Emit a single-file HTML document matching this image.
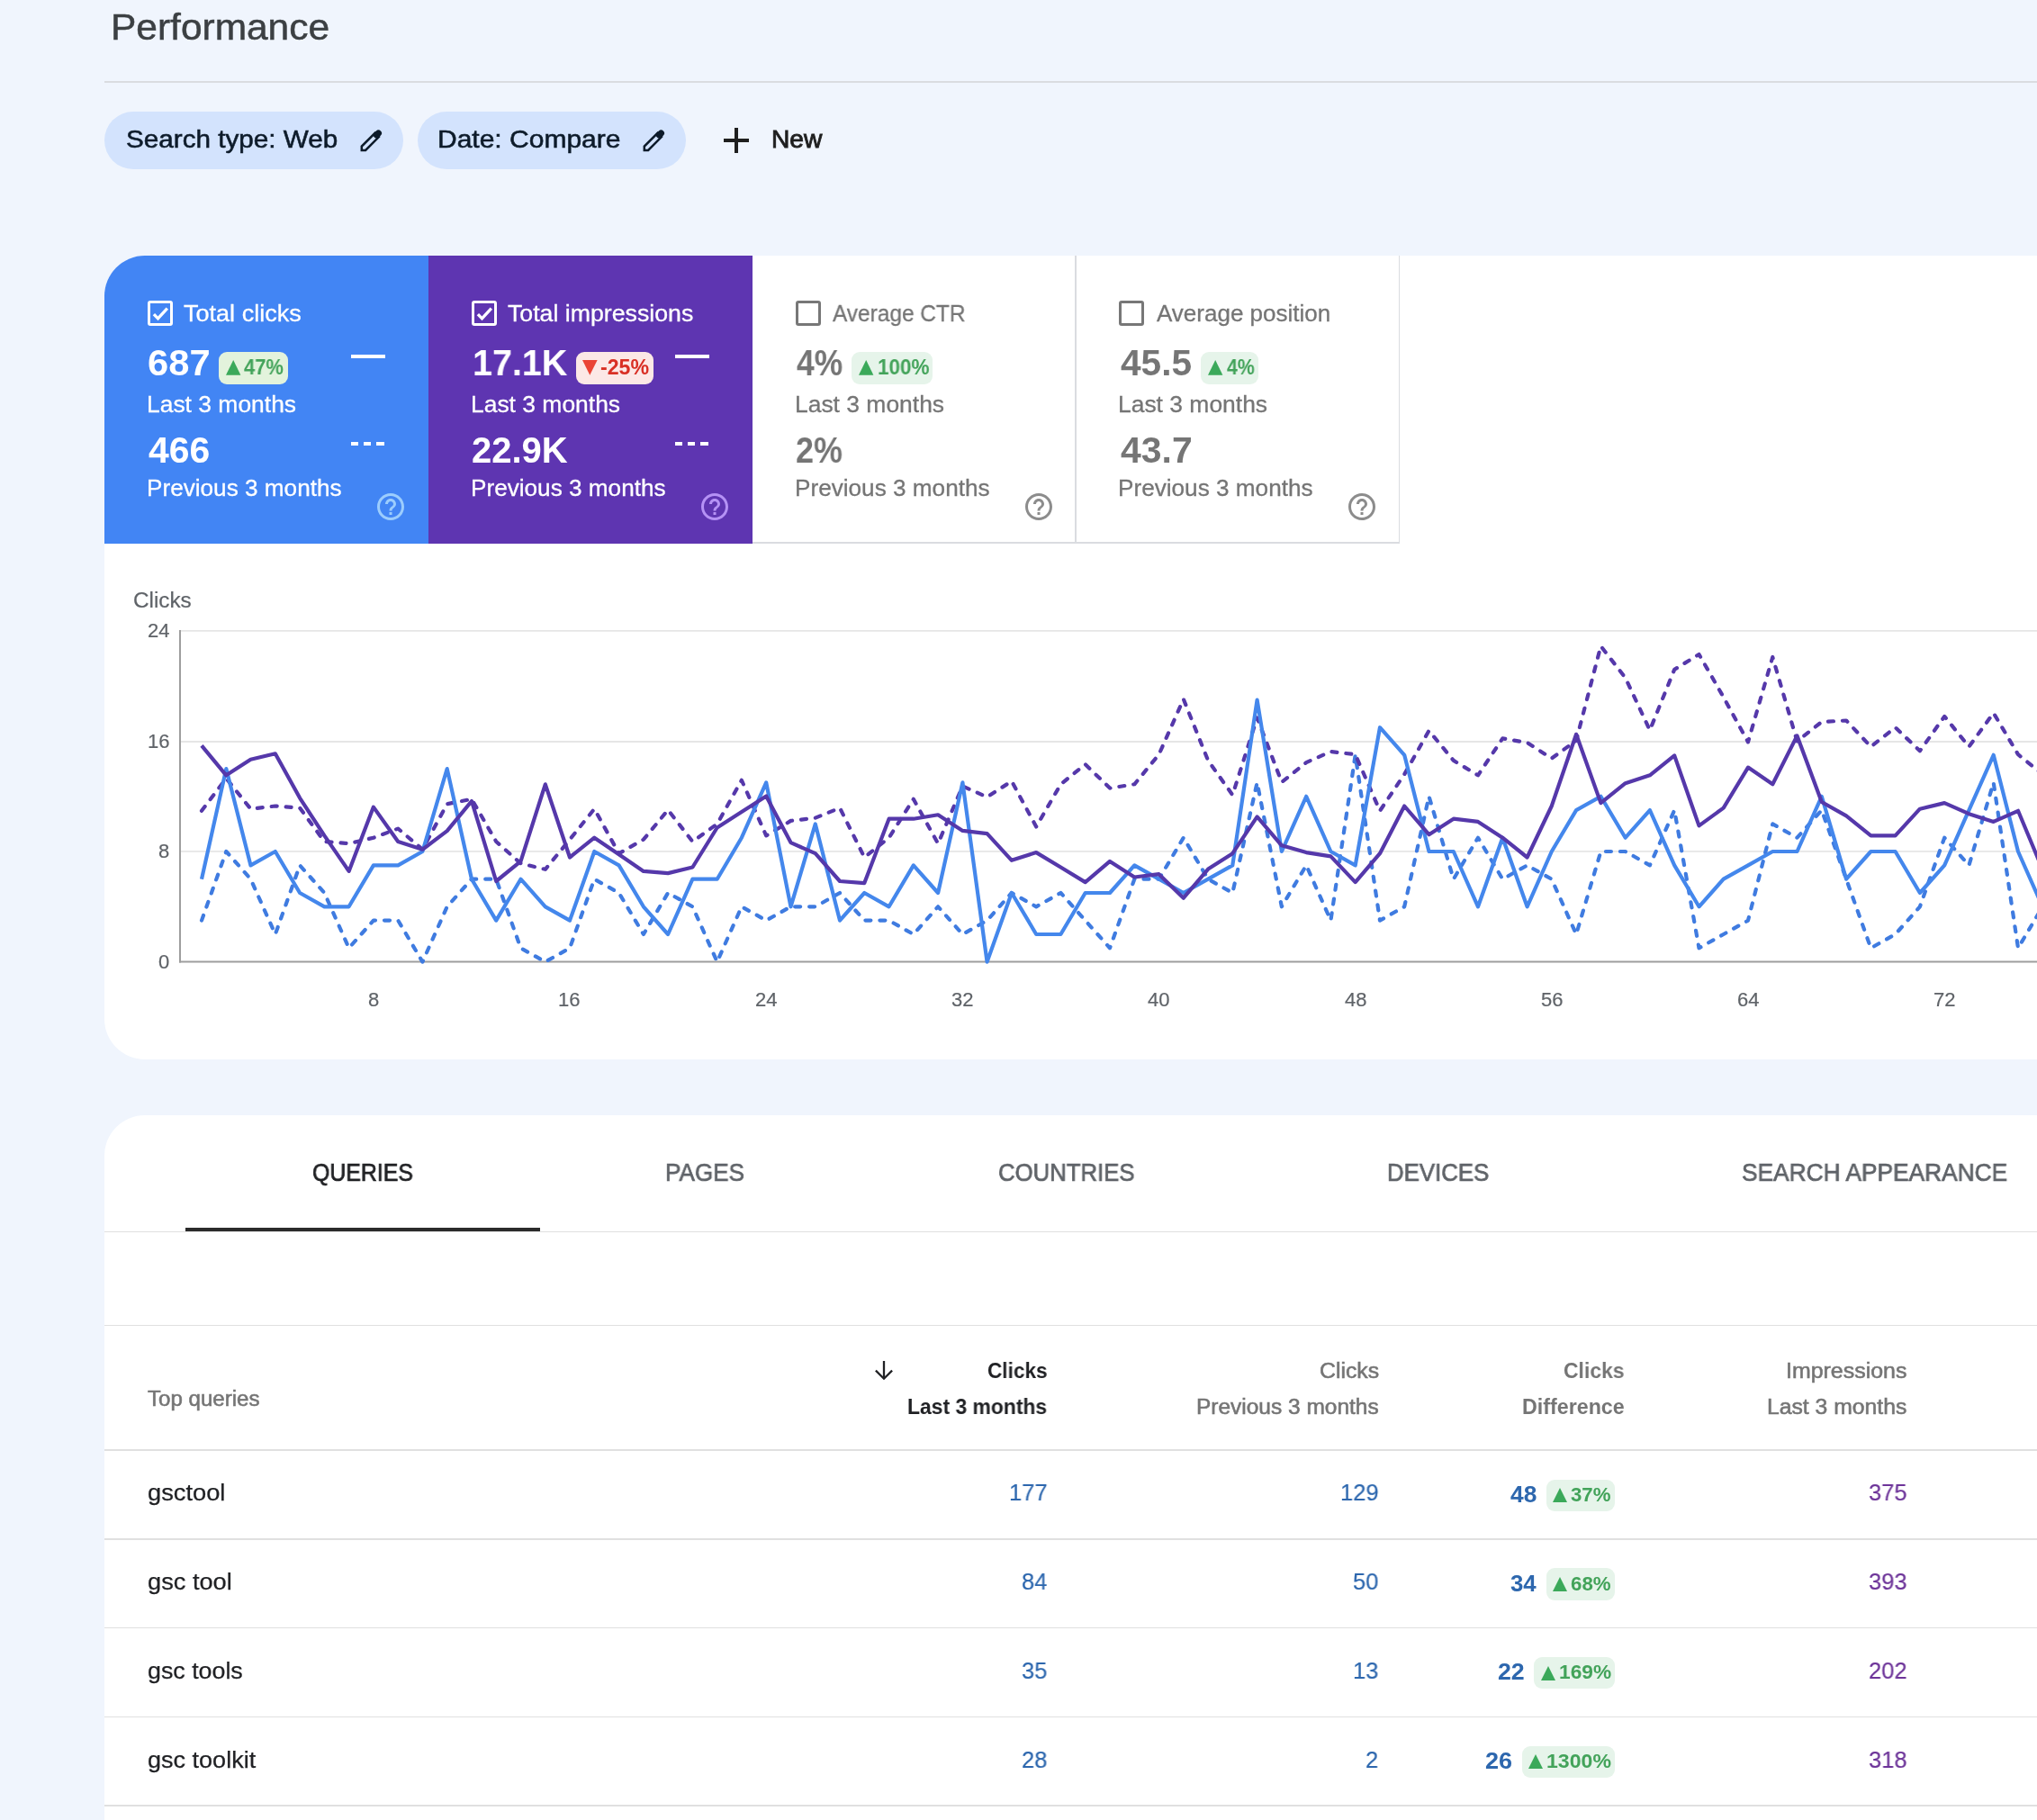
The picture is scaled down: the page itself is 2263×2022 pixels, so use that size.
<!DOCTYPE html><html><head><meta charset="utf-8"><style>
*{margin:0;padding:0;box-sizing:border-box}
html,body{width:2263px;height:2022px;overflow:hidden;background:#f0f5fd;font-family:"Liberation Sans",sans-serif}
.t{position:absolute;line-height:1;white-space:nowrap;transform-origin:0 0;will-change:transform}
.a{position:absolute}
</style></head><body>
<div class="t" style="left:122.80px;top:10.44px;font-size:40px;color:#3c4043;transform:scaleX(1.0616);-webkit-text-stroke:0.5px #3c4043">Performance</div>
<div class="a" style="left:116.00px;top:90.00px;width:2147.00px;height:2.00px;background:#dadce0"></div>
<div class="a" style="left:116.00px;top:124.00px;width:332.00px;height:64.00px;background:#d3e3fd;border-radius:32px"></div>
<div class="a" style="left:464.00px;top:124.00px;width:298.00px;height:64.00px;background:#d3e3fd;border-radius:32px"></div>
<div class="t" style="left:139.62px;top:141.30px;font-size:28px;color:#0d1b2a;transform:scaleX(1.0597);-webkit-text-stroke:0.55px #0d1b2a">Search type: Web</div>
<div class="t" style="left:486.44px;top:141.30px;font-size:28px;color:#0d1b2a;transform:scaleX(1.0714);-webkit-text-stroke:0.55px #0d1b2a">Date: Compare</div>
<svg class="a" style="left:397.5px;top:141.5px" width="28" height="28" ><path d="M3.8,24.9 L3.8,20.6 L18.6,5.8 L22.9,10.1 L8.1,24.9 Z" fill="none" stroke="#0d1b2a" stroke-width="2.5"/><line x1="20.4" y1="8.0" x2="22.4" y2="6.0" stroke="#0d1b2a" stroke-width="7.2" stroke-linecap="round"/></svg>
<svg class="a" style="left:712px;top:141.5px" width="28" height="28" ><path d="M3.8,24.9 L3.8,20.6 L18.6,5.8 L22.9,10.1 L8.1,24.9 Z" fill="none" stroke="#0d1b2a" stroke-width="2.5"/><line x1="20.4" y1="8.0" x2="22.4" y2="6.0" stroke="#0d1b2a" stroke-width="7.2" stroke-linecap="round"/></svg>
<div class="a" style="left:804.00px;top:154.30px;width:28.00px;height:3.40px;background:#1f1f1f"></div>
<div class="a" style="left:816.30px;top:142.30px;width:3.40px;height:27.40px;background:#1f1f1f"></div>
<div class="t" style="left:857.18px;top:141.30px;font-size:28px;color:#1f1f1f;transform:scaleX(1.0074);-webkit-text-stroke:0.9px #1f1f1f">New</div>
<div class="a" style="left:116px;top:284px;width:2200px;height:893px;background:#fff;border-radius:45px 0 0 45px;overflow:hidden">
<div class="a" style="left:0.00px;top:0.00px;width:360.00px;height:320.00px;background:#4285f4"></div>
<div class="a" style="left:360.00px;top:0.00px;width:360.00px;height:320.00px;background:#5e35b1"></div>
<div class="a" style="left:720.00px;top:318.00px;width:719.00px;height:2.00px;background:#dadce0"></div>
<div class="a" style="left:1078.00px;top:0.00px;width:1.80px;height:320.00px;background:#dadce0"></div>
<div class="a" style="left:1437.60px;top:0.00px;width:1.80px;height:320.00px;background:#dadce0"></div>
</div>
<div class="a" style="left:164.00px;top:334.00px;width:28.00px;height:28.00px;background:transparent;border:3px solid #ffffff;border-radius:3px"></div>
<svg class="a" style="left:164.0px;top:334px" width="28" height="28"><polyline points="6.9,15.2 11.5,19.9 21.8,8.6" fill="none" stroke="#fff" stroke-width="3.3"/></svg>
<div class="t" style="left:204.38px;top:334.99px;font-size:26px;color:#ffffff;transform:scaleX(1.0403);-webkit-text-stroke:0.3px #ffffff">Total clicks</div>
<div class="t" style="left:163.94px;top:383.14px;font-size:40px;color:#ffffff;font-weight:700;transform:scaleX(1.0425)">687</div>
<div class="t" style="left:164.59px;top:479.84px;font-size:40px;color:#ffffff;font-weight:700;transform:scaleX(1.0232)">466</div>
<div class="t" style="left:163.36px;top:435.99px;font-size:26px;color:#ffffff;transform:scaleX(1.0168);-webkit-text-stroke:0.3px #ffffff">Last 3 months</div>
<div class="t" style="left:163.09px;top:528.59px;font-size:26px;color:#ffffff;transform:scaleX(1.0057);-webkit-text-stroke:0.3px #ffffff">Previous 3 months</div>
<div class="a" style="left:243.00px;top:391.00px;width:77.00px;height:36.00px;background:#e3f3dc;border-radius:9px"></div>
<svg class="a" style="left:250.6px;top:400px" width="17" height="17"><polygon points="0,16.8 8.2,0 16.4,16.8" fill="#3ba95a"/></svg>
<div class="t" style="left:271.21px;top:397.33px;font-size:23px;color:#43a35a;font-weight:700;transform:scaleX(0.9558)">47%</div>
<div class="a" style="left:390.00px;top:394.00px;width:38.00px;height:4.20px;background:#fff"></div>
<div class="a" style="left:390.00px;top:490.60px;width:8.20px;height:4.60px;background:#fff"></div>
<div class="a" style="left:404.20px;top:490.60px;width:8.20px;height:4.60px;background:#fff"></div>
<div class="a" style="left:418.40px;top:490.60px;width:8.20px;height:4.60px;background:#fff"></div>
<svg class="a" style="left:416.0px;top:545.0px" width="36" height="36" viewBox="0 0 24 24"><path fill="#9ccdfd" d="M11 18h2v-2h-2v2zm1-16C6.48 2 2 6.48 2 12s4.48 10 10 10 10-4.48 10-10S17.52 2 12 2zm0 18c-4.41 0-8-3.59-8-8s3.59-8 8-8 8 3.59 8 8-3.59 8-8 8zm0-14c-2.21 0-4 1.79-4 4h2c0-1.1.9-2 2-2s2 .9 2 2c0 2-3 1.75-3 5h2c0-2.25 3-2.5 3-5 0-2.21-1.79-4-4-4z"/></svg>
<div class="a" style="left:524.00px;top:334.00px;width:28.00px;height:28.00px;background:transparent;border:3px solid #ffffff;border-radius:3px"></div>
<svg class="a" style="left:524.0px;top:334px" width="28" height="28"><polyline points="6.9,15.2 11.5,19.9 21.8,8.6" fill="none" stroke="#fff" stroke-width="3.3"/></svg>
<div class="t" style="left:564.08px;top:334.99px;font-size:26px;color:#ffffff;transform:scaleX(1.0271);-webkit-text-stroke:0.3px #ffffff">Total impressions</div>
<div class="t" style="left:524.53px;top:383.14px;font-size:40px;color:#ffffff;font-weight:700;transform:scaleX(0.9875)">17.1K</div>
<div class="t" style="left:523.90px;top:479.84px;font-size:40px;color:#ffffff;font-weight:700">22.9K</div>
<div class="t" style="left:523.36px;top:435.99px;font-size:26px;color:#ffffff;transform:scaleX(1.0168);-webkit-text-stroke:0.3px #ffffff">Last 3 months</div>
<div class="t" style="left:523.09px;top:528.59px;font-size:26px;color:#ffffff;transform:scaleX(1.0057);-webkit-text-stroke:0.3px #ffffff">Previous 3 months</div>
<div class="a" style="left:640.00px;top:391.00px;width:86.00px;height:36.00px;background:#fce8e6;border-radius:9px"></div>
<svg class="a" style="left:647.3px;top:400px" width="17" height="17"><polygon points="0,0 16.6,0 8.3,16.8" fill="#ea4335"/></svg>
<div class="t" style="left:667.39px;top:397.33px;font-size:23px;color:#d93025;font-weight:700;transform:scaleX(1.0077)">-25%</div>
<div class="a" style="left:750.00px;top:394.00px;width:38.00px;height:4.20px;background:#fff"></div>
<div class="a" style="left:750.00px;top:490.60px;width:8.20px;height:4.60px;background:#fff"></div>
<div class="a" style="left:764.20px;top:490.60px;width:8.20px;height:4.60px;background:#fff"></div>
<div class="a" style="left:778.40px;top:490.60px;width:8.20px;height:4.60px;background:#fff"></div>
<svg class="a" style="left:776.0px;top:545.0px" width="36" height="36" viewBox="0 0 24 24"><path fill="#b592f5" d="M11 18h2v-2h-2v2zm1-16C6.48 2 2 6.48 2 12s4.48 10 10 10 10-4.48 10-10S17.52 2 12 2zm0 18c-4.41 0-8-3.59-8-8s3.59-8 8-8 8 3.59 8 8-3.59 8-8 8zm0-14c-2.21 0-4 1.79-4 4h2c0-1.1.9-2 2-2s2 .9 2 2c0 2-3 1.75-3 5h2c0-2.25 3-2.5 3-5 0-2.21-1.79-4-4-4z"/></svg>
<div class="a" style="left:884.00px;top:334.00px;width:28.00px;height:28.00px;background:transparent;border:3px solid #777777;border-radius:3px"></div>
<div class="t" style="left:924.71px;top:334.99px;font-size:26px;color:#757575;transform:scaleX(0.9396);-webkit-text-stroke:0.3px #757575">Average CTR</div>
<div class="t" style="left:884.67px;top:383.14px;font-size:40px;color:#757575;font-weight:700;transform:scaleX(0.8859)">4%</div>
<div class="t" style="left:883.94px;top:479.84px;font-size:40px;color:#757575;font-weight:700;transform:scaleX(0.8987)">2%</div>
<div class="t" style="left:883.36px;top:435.99px;font-size:26px;color:#757575;transform:scaleX(1.0168);-webkit-text-stroke:0.3px #757575">Last 3 months</div>
<div class="t" style="left:883.09px;top:528.59px;font-size:26px;color:#757575;transform:scaleX(1.0057);-webkit-text-stroke:0.3px #757575">Previous 3 months</div>
<div class="a" style="left:945.80px;top:391.00px;width:90.60px;height:36.00px;background:#e6f4ea;border-radius:9px"></div>
<svg class="a" style="left:954.4px;top:400px" width="17" height="17"><polygon points="0,16.8 8.2,0 16.4,16.8" fill="#3ba95a"/></svg>
<div class="t" style="left:974.93px;top:397.33px;font-size:23px;color:#43a35a;font-weight:700;transform:scaleX(0.9789)">100%</div>
<svg class="a" style="left:1136.0px;top:545.0px" width="36" height="36" viewBox="0 0 24 24"><path fill="#8c8c8c" d="M11 18h2v-2h-2v2zm1-16C6.48 2 2 6.48 2 12s4.48 10 10 10 10-4.48 10-10S17.52 2 12 2zm0 18c-4.41 0-8-3.59-8-8s3.59-8 8-8 8 3.59 8 8-3.59 8-8 8zm0-14c-2.21 0-4 1.79-4 4h2c0-1.1.9-2 2-2s2 .9 2 2c0 2-3 1.75-3 5h2c0-2.25 3-2.5 3-5 0-2.21-1.79-4-4-4z"/></svg>
<div class="a" style="left:1243.00px;top:334.00px;width:28.00px;height:28.00px;background:transparent;border:3px solid #777777;border-radius:3px"></div>
<div class="t" style="left:1284.60px;top:334.99px;font-size:26px;color:#757575;-webkit-text-stroke:0.3px #757575">Average position</div>
<div class="t" style="left:1244.69px;top:383.14px;font-size:40px;color:#757575;font-weight:700;transform:scaleX(1.0158)">45.5</div>
<div class="t" style="left:1244.69px;top:479.84px;font-size:40px;color:#757575;font-weight:700;transform:scaleX(1.0238)">43.7</div>
<div class="t" style="left:1242.36px;top:435.99px;font-size:26px;color:#757575;transform:scaleX(1.0168);-webkit-text-stroke:0.3px #757575">Last 3 months</div>
<div class="t" style="left:1242.09px;top:528.59px;font-size:26px;color:#757575;transform:scaleX(1.0057);-webkit-text-stroke:0.3px #757575">Previous 3 months</div>
<div class="a" style="left:1334.40px;top:391.00px;width:63.60px;height:36.00px;background:#e6f4ea;border-radius:9px"></div>
<svg class="a" style="left:1342.2px;top:400px" width="17" height="17"><polygon points="0,16.8 8.2,0 16.4,16.8" fill="#3ba95a"/></svg>
<div class="t" style="left:1363.22px;top:397.33px;font-size:23px;color:#43a35a;font-weight:700;transform:scaleX(0.9259)">4%</div>
<svg class="a" style="left:1495.0px;top:545.0px" width="36" height="36" viewBox="0 0 24 24"><path fill="#8c8c8c" d="M11 18h2v-2h-2v2zm1-16C6.48 2 2 6.48 2 12s4.48 10 10 10 10-4.48 10-10S17.52 2 12 2zm0 18c-4.41 0-8-3.59-8-8s3.59-8 8-8 8 3.59 8 8-3.59 8-8 8zm0-14c-2.21 0-4 1.79-4 4h2c0-1.1.9-2 2-2s2 .9 2 2c0 2-3 1.75-3 5h2c0-2.25 3-2.5 3-5 0-2.21-1.79-4-4-4z"/></svg>
<div class="t" style="left:147.53px;top:655.53px;font-size:23px;color:#5f6368;transform:scaleX(1.0556);-webkit-text-stroke:0.2px #5f6368">Clicks</div>
<div class="t" style="left:163.60px;top:690.18px;font-size:22px;color:#5f6368;-webkit-text-stroke:0.2px #5f6368">24</div>
<div class="t" style="left:163.90px;top:813.28px;font-size:22px;color:#5f6368;-webkit-text-stroke:0.2px #5f6368">16</div>
<div class="t" style="left:176.10px;top:935.18px;font-size:22px;color:#5f6368;-webkit-text-stroke:0.2px #5f6368">8</div>
<div class="t" style="left:176.00px;top:1057.88px;font-size:22px;color:#5f6368;-webkit-text-stroke:0.2px #5f6368">0</div>
<div class="t" style="left:408.79px;top:1099.68px;font-size:22px;color:#5f6368;-webkit-text-stroke:0.2px #5f6368">8</div>
<div class="t" style="left:620.45px;top:1099.68px;font-size:22px;color:#5f6368;-webkit-text-stroke:0.2px #5f6368">16</div>
<div class="t" style="left:838.76px;top:1099.68px;font-size:22px;color:#5f6368;-webkit-text-stroke:0.2px #5f6368">24</div>
<div class="t" style="left:1057.32px;top:1099.68px;font-size:22px;color:#5f6368;-webkit-text-stroke:0.2px #5f6368">32</div>
<div class="t" style="left:1275.48px;top:1099.68px;font-size:22px;color:#5f6368;-webkit-text-stroke:0.2px #5f6368">40</div>
<div class="t" style="left:1493.69px;top:1099.68px;font-size:22px;color:#5f6368;-webkit-text-stroke:0.2px #5f6368">48</div>
<div class="t" style="left:1711.65px;top:1099.68px;font-size:22px;color:#5f6368;-webkit-text-stroke:0.2px #5f6368">56</div>
<div class="t" style="left:1929.56px;top:1099.68px;font-size:22px;color:#5f6368;-webkit-text-stroke:0.2px #5f6368">64</div>
<div class="t" style="left:2147.97px;top:1099.68px;font-size:22px;color:#5f6368;-webkit-text-stroke:0.2px #5f6368">72</div>
<svg class="a" style="left:0;top:0" width="2263" height="1177"><line x1="200" y1="700.9" x2="2263" y2="700.9" stroke="#e6e6e6" stroke-width="1.8"/><line x1="200" y1="824.0" x2="2263" y2="824.0" stroke="#e6e6e6" stroke-width="1.8"/><line x1="200" y1="945.9" x2="2263" y2="945.9" stroke="#e6e6e6" stroke-width="1.8"/><line x1="199" y1="1068.6" x2="2263" y2="1068.6" stroke="#9e9e9e" stroke-width="2"/><line x1="200" y1="700" x2="200" y2="1069.6" stroke="#9e9e9e" stroke-width="2"/><path d="M224.0,1022.6 L251.3,946.0 L278.5,976.7 L305.8,1038.0 L333.1,961.4 L360.4,992.0 L387.6,1053.3 L414.9,1022.6 L442.2,1022.6 L469.4,1068.6 L496.7,1007.3 L524.0,976.7 L551.2,976.7 L578.5,1053.3 L605.8,1068.6 L633.0,1053.3 L660.3,976.7 L687.6,992.0 L714.9,1038.0 L742.1,992.0 L769.4,1007.3 L796.7,1068.6 L823.9,1007.3 L851.2,1022.6 L878.5,1007.3 L905.8,1007.3 L933.0,992.0 L960.3,1022.6 L987.6,1022.6 L1014.8,1038.0 L1042.1,1007.3 L1069.4,1038.0 L1096.6,1022.6 L1123.9,992.0 L1151.2,1007.3 L1178.4,992.0 L1205.7,1022.6 L1233.0,1053.3 L1260.3,976.7 L1287.5,976.7 L1314.8,930.7 L1342.1,976.7 L1369.3,992.0 L1396.6,869.4 L1423.9,1007.3 L1451.2,961.4 L1478.4,1022.6 L1505.7,838.8 L1533.0,1022.6 L1560.2,1007.3 L1587.5,884.8 L1614.8,976.7 L1642.0,930.7 L1669.3,976.7 L1696.6,961.4 L1723.8,976.7 L1751.1,1038.0 L1778.4,946.0 L1805.7,946.0 L1832.9,961.4 L1860.2,900.1 L1887.5,1053.3 L1914.7,1038.0 L1942.0,1022.6 L1969.3,915.4 L1996.5,930.7 L2023.8,900.1 L2051.1,976.7 L2078.4,1053.3 L2105.6,1038.0 L2132.9,1007.3 L2160.2,930.7 L2187.4,961.4 L2214.7,869.4 L2242.0,1053.3 L2269.2,1007.3" fill="none" stroke="#3f7be0" stroke-width="4.2" stroke-dasharray="6 10" stroke-linecap="round" stroke-linejoin="round"/><path d="M224.0,900.8 L251.3,864.8 L278.5,898.7 L305.8,895.5 L333.1,897.6 L360.4,935.0 L387.6,937.2 L414.9,930.7 L442.2,920.6 L469.4,943.7 L496.7,893.2 L524.0,887.8 L551.2,935.0 L578.5,959.2 L605.8,965.8 L633.0,932.7 L660.3,898.7 L687.6,948.2 L714.9,932.7 L742.1,899.8 L769.4,935.0 L796.7,915.4 L823.9,866.8 L851.2,928.4 L878.5,911.9 L905.8,908.7 L933.0,897.6 L960.3,952.5 L987.6,930.7 L1014.8,887.8 L1042.1,937.2 L1069.4,873.4 L1096.6,885.5 L1123.9,867.9 L1151.2,918.5 L1178.4,871.3 L1205.7,849.2 L1233.0,875.6 L1260.3,871.3 L1287.5,838.2 L1314.8,776.8 L1342.1,844.9 L1369.3,883.2 L1396.6,797.4 L1423.9,869.0 L1451.2,847.1 L1478.4,835.0 L1505.7,838.2 L1533.0,900.8 L1560.2,860.2 L1587.5,811.8 L1614.8,844.9 L1642.0,861.3 L1669.3,820.4 L1696.6,825.0 L1723.8,842.6 L1751.1,822.7 L1778.4,717.8 L1805.7,753.0 L1832.9,811.2 L1860.2,743.8 L1887.5,727.0 L1914.7,774.5 L1942.0,824.4 L1969.3,730.0 L1996.5,823.5 L2023.8,802.0 L2051.1,800.5 L2078.4,829.6 L2105.6,808.2 L2132.9,834.2 L2160.2,795.9 L2187.4,829.6 L2214.7,792.1 L2242.0,838.2 L2269.2,860.2" fill="none" stroke="#5538aa" stroke-width="4.2" stroke-dasharray="6 10" stroke-linecap="round" stroke-linejoin="round"/><path d="M224.0,976.7 L251.3,854.1 L278.5,961.4 L305.8,946.0 L333.1,992.0 L360.4,1007.3 L387.6,1007.3 L414.9,961.4 L442.2,961.4 L469.4,946.0 L496.7,854.1 L524.0,976.7 L551.2,1022.6 L578.5,976.7 L605.8,1007.3 L633.0,1022.6 L660.3,946.0 L687.6,961.4 L714.9,1007.3 L742.1,1038.0 L769.4,976.7 L796.7,976.7 L823.9,930.7 L851.2,869.4 L878.5,1007.3 L905.8,915.4 L933.0,1022.6 L960.3,992.0 L987.6,1007.3 L1014.8,961.4 L1042.1,992.0 L1069.4,869.4 L1096.6,1068.6 L1123.9,992.0 L1151.2,1038.0 L1178.4,1038.0 L1205.7,992.0 L1233.0,992.0 L1260.3,961.4 L1287.5,976.7 L1314.8,992.0 L1342.1,976.7 L1369.3,961.4 L1396.6,777.5 L1423.9,946.0 L1451.2,884.8 L1478.4,946.0 L1505.7,961.4 L1533.0,808.2 L1560.2,838.8 L1587.5,946.0 L1614.8,946.0 L1642.0,1007.3 L1669.3,930.7 L1696.6,1007.3 L1723.8,946.0 L1751.1,900.1 L1778.4,884.8 L1805.7,930.7 L1832.9,900.1 L1860.2,961.4 L1887.5,1007.3 L1914.7,976.7 L1942.0,961.4 L1969.3,946.0 L1996.5,946.0 L2023.8,884.8 L2051.1,976.7 L2078.4,946.0 L2105.6,946.0 L2132.9,992.0 L2160.2,961.4 L2187.4,900.1 L2214.7,838.8 L2242.0,946.0 L2269.2,1007.3" fill="none" stroke="#4487ec" stroke-width="4.2" stroke-linejoin="round"/><path d="M224.0,828.4 L251.3,861.3 L278.5,843.7 L305.8,837.3 L333.1,886.6 L360.4,928.4 L387.6,967.9 L414.9,896.6 L442.2,935.0 L469.4,943.7 L496.7,923.1 L524.0,890.0 L551.2,979.0 L578.5,956.9 L605.8,871.3 L633.0,952.5 L660.3,930.7 L687.6,949.3 L714.9,967.9 L742.1,970.1 L769.4,963.5 L796.7,919.5 L823.9,902.1 L851.2,884.5 L878.5,936.1 L905.8,948.2 L933.0,979.0 L960.3,981.1 L987.6,909.7 L1014.8,909.7 L1042.1,905.3 L1069.4,922.9 L1096.6,926.1 L1123.9,955.8 L1151.2,947.1 L1178.4,963.5 L1205.7,980.1 L1233.0,956.9 L1260.3,974.5 L1287.5,971.2 L1314.8,997.7 L1342.1,965.6 L1369.3,948.2 L1396.6,907.4 L1423.9,939.3 L1451.2,947.1 L1478.4,951.4 L1505.7,980.1 L1533.0,948.2 L1560.2,895.5 L1587.5,927.2 L1614.8,909.7 L1642.0,912.9 L1669.3,930.7 L1696.6,952.5 L1723.8,895.5 L1751.1,815.8 L1778.4,892.1 L1805.7,870.2 L1832.9,861.3 L1860.2,839.4 L1887.5,917.4 L1914.7,897.6 L1942.0,852.6 L1969.3,871.3 L1996.5,817.4 L2023.8,891.0 L2051.1,906.4 L2078.4,928.4 L2105.6,928.4 L2132.9,898.7 L2160.2,892.1 L2187.4,904.2 L2214.7,912.9 L2242.0,900.8 L2269.2,966.0" fill="none" stroke="#5538aa" stroke-width="4.2" stroke-linejoin="round"/></svg>
<div class="a" style="left:116.00px;top:1239.40px;width:2200.00px;height:900.00px;background:#fff;border-radius:45px 0 0 0"></div>
<div class="t" style="left:346.80px;top:1289.84px;font-size:27px;color:#202124;transform:scaleX(0.9210);-webkit-text-stroke:0.7px #202124">QUERIES</div>
<div class="t" style="left:739.37px;top:1289.84px;font-size:27px;color:#5f6368;transform:scaleX(0.9669);-webkit-text-stroke:0.7px #5f6368">PAGES</div>
<div class="t" style="left:1108.67px;top:1289.84px;font-size:27px;color:#5f6368;transform:scaleX(0.9527);-webkit-text-stroke:0.7px #5f6368">COUNTRIES</div>
<div class="t" style="left:1540.90px;top:1289.84px;font-size:27px;color:#5f6368;transform:scaleX(0.9557);-webkit-text-stroke:0.7px #5f6368">DEVICES</div>
<div class="t" style="left:1934.83px;top:1289.84px;font-size:27px;color:#5f6368;transform:scaleX(0.9741);-webkit-text-stroke:0.7px #5f6368">SEARCH APPEARANCE</div>
<div class="a" style="left:116.00px;top:1367.60px;width:2147.00px;height:1.80px;background:#e0e0e0"></div>
<div class="a" style="left:205.80px;top:1364.00px;width:394.20px;height:4.20px;background:#2b2b2b"></div>
<div class="a" style="left:116.00px;top:1471.70px;width:2147.00px;height:1.80px;background:#e0e0e0"></div>
<div class="a" style="left:116.00px;top:1610.10px;width:2147.00px;height:1.80px;background:#e0e0e0"></div>
<div class="t" style="left:164.28px;top:1542.53px;font-size:23px;color:#757575;transform:scaleX(1.0468);-webkit-text-stroke:0.55px #757575">Top queries</div>
<div class="t" style="left:1096.92px;top:1511.53px;font-size:23px;color:#202124;font-weight:700;transform:scaleX(0.9818)">Clicks</div>
<div class="t" style="left:1008.31px;top:1551.53px;font-size:23px;color:#202124;font-weight:700;transform:scaleX(0.9954)">Last 3 months</div>
<div class="t" style="left:1465.81px;top:1511.53px;font-size:23px;color:#757575;transform:scaleX(1.0776);-webkit-text-stroke:0.55px #757575">Clicks</div>
<div class="t" style="left:1329.18px;top:1551.53px;font-size:23px;color:#757575;transform:scaleX(1.0639);-webkit-text-stroke:0.55px #757575">Previous 3 months</div>
<div class="t" style="left:1737.40px;top:1511.53px;font-size:23px;color:#757575;font-weight:700;transform:scaleX(0.9955)">Clicks</div>
<div class="t" style="left:1691.08px;top:1551.53px;font-size:23px;color:#757575;font-weight:700;transform:scaleX(1.0109)">Difference</div>
<div class="t" style="left:1983.82px;top:1511.53px;font-size:23px;color:#757575;transform:scaleX(1.0842);-webkit-text-stroke:0.55px #757575">Impressions</div>
<div class="t" style="left:1962.96px;top:1551.53px;font-size:23px;color:#757575;transform:scaleX(1.0748);-webkit-text-stroke:0.55px #757575">Last 3 months</div>
<svg class="a" style="left:970px;top:1509px" width="24" height="26"><path d="M12 3v19M2.9 13.6L12 22.7 21.1 13.6" fill="none" stroke="#202124" stroke-width="2.3"/></svg>
<div class="t" style="left:163.65px;top:1645.19px;font-size:26px;color:#202124;transform:scaleX(1.0491);-webkit-text-stroke:0.25px #202124">gsctool</div>
<div class="t" style="left:1121.34px;top:1645.19px;font-size:26px;color:#2d67ae;transform:scaleX(0.9800);-webkit-text-stroke:0.2px #2d67ae">177</div>
<div class="t" style="left:1489.14px;top:1645.19px;font-size:26px;color:#2d67ae;transform:scaleX(0.9800);-webkit-text-stroke:0.2px #2d67ae">129</div>
<div class="t" style="left:2076.15px;top:1645.19px;font-size:26px;color:#6d3499;transform:scaleX(0.9800);-webkit-text-stroke:0.2px #6d3499">375</div>
<div class="a" style="left:116.00px;top:1708.90px;width:2147.00px;height:1.80px;background:#e0e0e0"></div>
<div class="t" style="left:163.65px;top:1743.99px;font-size:26px;color:#202124;transform:scaleX(1.0461);-webkit-text-stroke:0.25px #202124">gsc tool</div>
<div class="t" style="left:1134.96px;top:1743.99px;font-size:26px;color:#2d67ae;transform:scaleX(0.9800);-webkit-text-stroke:0.2px #2d67ae">84</div>
<div class="t" style="left:1502.96px;top:1743.99px;font-size:26px;color:#2d67ae;transform:scaleX(0.9800);-webkit-text-stroke:0.2px #2d67ae">50</div>
<div class="t" style="left:2076.24px;top:1743.99px;font-size:26px;color:#6d3499;transform:scaleX(0.9800);-webkit-text-stroke:0.2px #6d3499">393</div>
<div class="a" style="left:116.00px;top:1807.70px;width:2147.00px;height:1.80px;background:#e0e0e0"></div>
<div class="t" style="left:163.67px;top:1842.79px;font-size:26px;color:#202124;transform:scaleX(1.0308);-webkit-text-stroke:0.25px #202124">gsc tools</div>
<div class="t" style="left:1135.26px;top:1842.79px;font-size:26px;color:#2d67ae;transform:scaleX(0.9800);-webkit-text-stroke:0.2px #2d67ae">35</div>
<div class="t" style="left:1503.16px;top:1842.79px;font-size:26px;color:#2d67ae;transform:scaleX(0.9800);-webkit-text-stroke:0.2px #2d67ae">13</div>
<div class="t" style="left:2076.34px;top:1842.79px;font-size:26px;color:#6d3499;transform:scaleX(0.9800);-webkit-text-stroke:0.2px #6d3499">202</div>
<div class="a" style="left:116.00px;top:1906.50px;width:2147.00px;height:1.80px;background:#e0e0e0"></div>
<div class="t" style="left:163.66px;top:1941.59px;font-size:26px;color:#202124;transform:scaleX(1.0394);-webkit-text-stroke:0.25px #202124">gsc toolkit</div>
<div class="t" style="left:1135.36px;top:1941.59px;font-size:26px;color:#2d67ae;transform:scaleX(0.9800);-webkit-text-stroke:0.2px #2d67ae">28</div>
<div class="t" style="left:1517.46px;top:1941.59px;font-size:26px;color:#2d67ae;transform:scaleX(0.9800);-webkit-text-stroke:0.2px #2d67ae">2</div>
<div class="t" style="left:2076.24px;top:1941.59px;font-size:26px;color:#6d3499;transform:scaleX(0.9800);-webkit-text-stroke:0.2px #6d3499">318</div>
<div class="a" style="left:116.00px;top:2005.30px;width:2147.00px;height:1.80px;background:#e0e0e0"></div>
<div class="t" style="left:1677.58px;top:1647.74px;font-size:25px;color:#2d67ae;font-weight:700;transform:scaleX(1.0526)">48</div>
<div class="a" style="left:1717.70px;top:1643.50px;width:76.10px;height:35.40px;background:#e6f4ea;border-radius:9px"></div>
<svg class="a" style="left:1725.3px;top:1652.9px" width="17" height="17"><polygon points="0,16 8,0 16,16" fill="#3ba95a"/></svg>
<div class="t" style="left:1745.28px;top:1650.70px;font-size:21.5px;color:#43a35a;font-weight:700;transform:scaleX(1.0333)">37%</div>
<div class="t" style="left:1677.88px;top:1746.54px;font-size:25px;color:#2d67ae;font-weight:700;transform:scaleX(1.0332)">34</div>
<div class="a" style="left:1717.70px;top:1742.30px;width:76.10px;height:35.40px;background:#e6f4ea;border-radius:9px"></div>
<svg class="a" style="left:1725.4px;top:1751.7px" width="17" height="17"><polygon points="0,16 8,0 16,16" fill="#3ba95a"/></svg>
<div class="t" style="left:1745.17px;top:1749.50px;font-size:21.5px;color:#43a35a;font-weight:700;transform:scaleX(1.0360)">68%</div>
<div class="t" style="left:1663.64px;top:1845.34px;font-size:25px;color:#2d67ae;font-weight:700;transform:scaleX(1.0695)">22</div>
<div class="a" style="left:1704.30px;top:1841.10px;width:89.50px;height:35.40px;background:#e6f4ea;border-radius:9px"></div>
<svg class="a" style="left:1711.8px;top:1850.5px" width="17" height="17"><polygon points="0,16 8,0 16,16" fill="#3ba95a"/></svg>
<div class="t" style="left:1731.63px;top:1848.30px;font-size:21.5px;color:#43a35a;font-weight:700;transform:scaleX(1.0564)">169%</div>
<div class="t" style="left:1649.83px;top:1944.14px;font-size:25px;color:#2d67ae;font-weight:700;transform:scaleX(1.0808)">26</div>
<div class="a" style="left:1690.50px;top:1939.90px;width:103.30px;height:35.40px;background:#e6f4ea;border-radius:9px"></div>
<svg class="a" style="left:1698.2px;top:1949.3px" width="17" height="17"><polygon points="0,16 8,0 16,16" fill="#3ba95a"/></svg>
<div class="t" style="left:1717.80px;top:1947.10px;font-size:21.5px;color:#43a35a;font-weight:700;transform:scaleX(1.0753)">1300%</div>
</body></html>
